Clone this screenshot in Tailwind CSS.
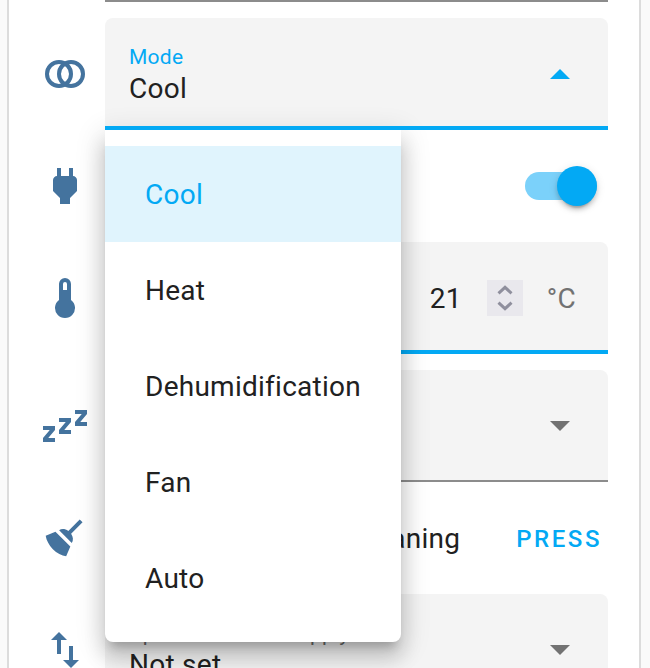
<!DOCTYPE html>
<html lang="en">
<head>
<meta charset="utf-8">
<title>Climate controls</title>
<script src="https://cdn.jsdelivr.net/npm/@tailwindcss/browser@4"></script>
</head>
<body class="h-[668px] w-[650px] overflow-hidden bg-[#fafafa] font-[Roboto,sans-serif] text-[28px] leading-8 tracking-[0.26px] text-[#212121]">
<main class="relative ml-[7px] h-[668px] w-[634px] overflow-hidden border-x-2 border-[#dcdcdc] bg-white pr-[31px] pl-8">
  <div class="ml-16 h-0.5 bg-[#8c8c8c]"></div>
  <div class="mt-4 flex flex-col gap-4">

    <div class="flex items-center gap-4">
      <svg class="size-12 shrink-0" viewBox="0 0 24 24" fill="none" stroke="#44739e" stroke-width="2"><circle cx="9" cy="12" r="6"/><circle cx="15" cy="12" r="6"/></svg>
      <div class="flex h-28 grow items-center justify-between rounded-t-lg border-b-4 border-[#03a9f4] bg-[#f4f4f4] pr-6 pl-6">
        <div class="pt-[3px]">
          <div class="mb-px text-[21px] leading-[30px] text-[#03a9f4]">Mode</div>
          <div>Cool</div>
        </div>
        <svg class="mt-1 size-12" viewBox="0 0 24 24" fill="#03a9f4"><path d="M7 14.500l5-5 5 5z"/></svg>
      </div>
    </div>

    <div class="flex h-20 items-center justify-between">
      <svg class="size-12 shrink-0" viewBox="0 0 24 24" fill="#44739e"><path d="M16,7V3H14V7H10V3H8V7H8C7,7 6,8 6,9V14.5L9.5,18V21H14.5V18L18,14.5V9C18,8 17,7 16,7Z"/></svg>
      <div class="mr-[11px] flex h-7 w-[72px] items-center justify-end rounded-full bg-[#7bd1fa]">
        <div class="size-10 shrink-0 rounded-full bg-[#03a9f4] shadow-[0_6px_2px_-4px_rgba(0,0,0,0.2),0_4px_4px_0_rgba(0,0,0,0.14),0_2px_10px_0_rgba(0,0,0,0.12)]"></div>
      </div>
    </div>

    <div class="flex items-center gap-4">
      <svg class="size-12 shrink-0" viewBox="0 0 24 24" fill="#44739e"><path d="M15 13V5A3 3 0 0 0 9 5V13A5 5 0 1 0 15 13M12 4A1 1 0 0 1 13 5V8H11V5A1 1 0 0 1 12 4Z"/></svg>
      <div class="flex h-28 grow items-center justify-end rounded-t-lg border-b-4 border-[#03a9f4] bg-[#f4f4f4] pt-1 pr-8">
        <span class="pt-0.5">21</span>
        <div class="ml-[25px] flex size-9 items-center justify-center bg-[#e9e8ed]">
          <svg class="size-9" viewBox="0 0 36 36" fill="none" stroke="#8f8f9d" stroke-width="3"><path d="M11.500 13.300L18 7.300l6.500 6M11.500 22.700L18 28.700l6.500-6"/></svg>
        </div>
        <span class="ml-6 pt-0.5 text-[#727272]">°C</span>
      </div>
    </div>

    <div class="flex items-center gap-4">
      <svg class="size-12 shrink-0" viewBox="0 0 24 24" fill="#44739e"><path d="M23,12H17V10L20.390,6H17V4H23V6L19.620,10H23V12M15,16H9V14L12.390,10H9V8H15V10L11.620,14H15V16M7,20H1V18L4.390,14H1V12H7V14L3.620,18H7V20Z"/></svg>
      <div class="flex h-28 grow items-center justify-end rounded-t-lg border-b-2 border-[#8c8c8c] bg-[#f4f4f4] pr-6">
        <svg class="mt-0.5 size-12" viewBox="0 0 24 24" fill="#727272"><path d="M7 9.500l5 5 5-5z"/></svg>
      </div>
    </div>

    <div class="flex h-20 items-center">
      <svg class="size-12 shrink-0" viewBox="0 0 24 24" fill="#44739e"><path d="M19.36,2.72L20.78,4.14L15.06,9.85C16.13,11.39 16.28,13.24 15.38,14.44L9.06,8.12C10.26,7.22 12.11,7.37 13.65,8.44L19.36,2.72M5.93,17.57C3.92,15.56 2.69,13.16 2.35,10.92L7.23,8.83L14.67,16.27L12.58,21.15C10.34,20.81 7.94,19.58 5.93,17.57Z"/></svg>
      <span class="ml-auto pt-0.5">Self cleaning</span>
      <button class="mr-1.5 ml-14 pt-0.5 text-2xl font-medium tracking-[2.560px] text-[#03a9f4]">PRESS</button>
    </div>

    <div class="flex items-center gap-4">
      <svg class="size-12 shrink-0" viewBox="0 0 24 24" fill="#44739e"><path d="M9,3L5,7H8V14H10V7H13M16,17V10H14V17H11L15,21L19,17H16Z"/></svg>
      <div class="flex h-28 grow items-center justify-between rounded-t-lg border-b-2 border-[#8c8c8c] bg-[#f4f4f4] pr-6 pl-6">
        <div class="pt-0.5">
          <div class="text-[21px] leading-[30px] tracking-[0.15px] text-[#6c6c6c]">Up and down air supply</div>
          <div>Not set</div>
        </div>
        <svg class="mt-0.5 size-12" viewBox="0 0 24 24" fill="#727272"><path d="M7 9.500l5 5 5-5z"/></svg>
      </div>
    </div>
  </div>

  <div class="absolute top-[130px] left-24 h-[512px] w-[296px] rounded-lg rounded-t-none bg-white py-4 shadow-[0_10px_10px_-6px_rgba(0,0,0,0.2),0_16px_20px_2px_rgba(0,0,0,0.14),0_6px_28px_4px_rgba(0,0,0,0.12)]">
    <div class="flex h-24 items-center bg-[#e0f4fd] pt-0.5 pl-10 text-[#03a9f4]">Cool</div>
    <div class="flex h-24 items-center pt-0.5 pl-10">Heat</div>
    <div class="flex h-24 items-center pt-0.5 pl-10">Dehumidification</div>
    <div class="flex h-24 items-center pt-0.5 pl-10">Fan</div>
    <div class="flex h-24 items-center pt-0.5 pl-10">Auto</div>
  </div>
  <div class="absolute top-[126px] left-24 h-1 w-[503px] bg-[#03a9f4]"></div>
</main>
</body>
</html>
